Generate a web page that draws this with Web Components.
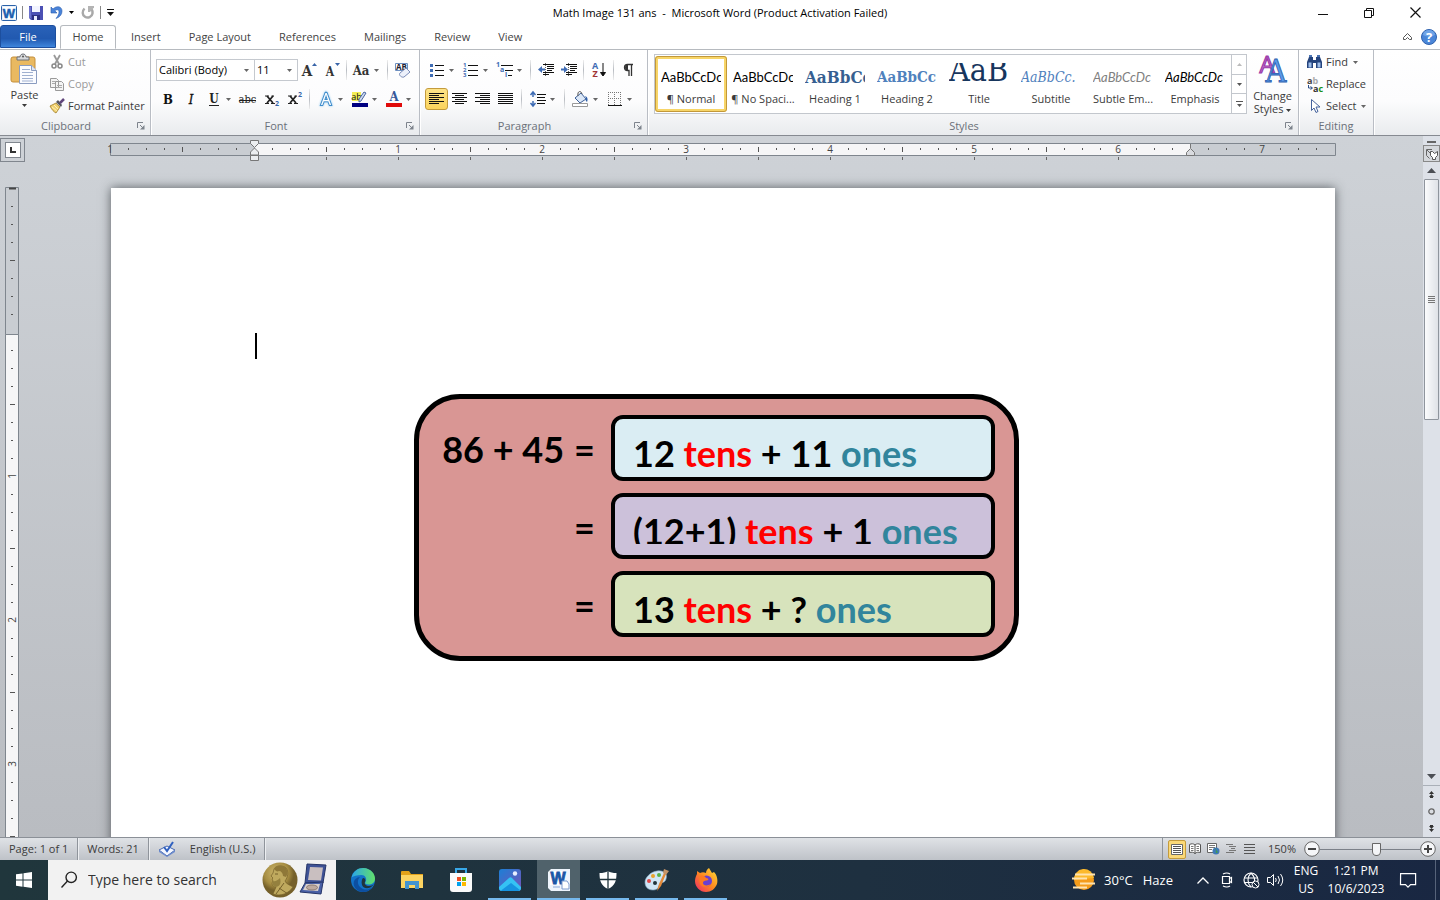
<!DOCTYPE html>
<html lang="en">
<head>
<meta charset="utf-8">
<title>Math Image 131 ans - Microsoft Word</title>
<style>
    html, body {
        height: 100%;
        margin: 0;
    }
    body {
        font: 11px/16px "Open Sans", "Noto Sans", sans-serif;
        color: #3b3b3b;
        overflow: hidden;
    }
</style>
</head>
<body>
<word-window>
    <word-titlebar slot="title">Math Image 131 ans&nbsp; -&nbsp; Microsoft Word (Product Activation Failed)</word-titlebar>
    <word-tabs slot="tabs"></word-tabs>
    <word-ribbon slot="ribbon"></word-ribbon>
    <word-workspace slot="workspace">
        <math-card></math-card>
    </word-workspace>
    <word-statusbar slot="status"></word-statusbar>
    <win-taskbar slot="taskbar"></win-taskbar>
</word-window>

<script>
// [width, height, markup]
const lines = (rows) => rows.map(([x, y, w]) => `<path d="M${x} ${y + 0.5}h${w}" stroke="#111"/>`).join('');
const serif = `font-family="DejaVu Serif Condensed, DejaVu Serif, serif"`;
const icons = {
    word: [16, 16, `<rect x=".5" y=".5" width="15" height="15" rx="1" fill="#e9f1fb" stroke="#2b62a8"/><rect x="2" y="2" width="12" height="12" fill="#fff"/><text x="8" y="13" font-size="13" font-weight="bold" text-anchor="middle" fill="#1c5fb0" stroke="#1c5fb0" stroke-width=".5" font-family="Liberation Sans, sans-serif">W</text>`],
    save: [14, 14, `<path d="M0 0h14v14H2L0 12z" fill="#4b50b4"/><path d="M3 0h8v6H3z" fill="#f2f4ff"/><path d="M3 9h8v5H3z" fill="#2c2f80"/><path d="M5 10h3v4H5z" fill="#e8eaff"/><path d="M1 1v11" stroke="#8d93e4"/>`],
    undo: [13, 13, `<path d="M1 1v6h6L4.800 4.800C7 3.200 9 3.500 9 6c0 2-1 4-3 6.500 4-1.500 6-4 6-7.500 0-4.500-5-6-9-2z" fill="#4a84da" stroke="#2a5dad" stroke-width=".6"/>`],
    redo: [13, 13, `<path d="M3.500 2.500C1 5 1 9 4 10.800s7 0 7.500-3.300c.3-2-.5-4-2-5" fill="none" stroke="#a9a9a9" stroke-width="2.400"/><path d="M7 0h6v1.500L9 6H7z" fill="#b4b4b4"/>`],
    drop: [5, 3, `<path d="M0 0h5L2.500 3z" fill="currentColor"/>`],
    customize: [7, 7, `<path d="M0 .5h7" stroke="#111"/><path d="M0 3h7L3.500 7z" fill="#111"/>`],
    minimize: [10, 10, `<path d="M0 6.500h10" stroke="#111"/>`],
    restore: [10, 10, `<path d="M.5 2.500h7v7h-7zM2.500 2.500v-2h7v7h-2" fill="none" stroke="#111"/>`],
    close: [11, 11, `<path d="M.5.500l10 10M10.500.500l-10 10" stroke="#111" stroke-width="1.200"/>`],
    collapse: [9, 8, `<path d="M.5 4.500L4.500.500l4 4v2h-2l-2-2-2 2h-2z" fill="#fff" stroke="#555"/>`],
    help: [16, 16, `<circle cx="8" cy="8" r="7.500" fill="#4a86d8" stroke="#2f62ae"/><path d="M2 6a6 5 0 0112 0c-4 2-8 2-12 0" fill="#7fb0ee" opacity=".7"/><text x="8" y="12.500" font-size="13" font-weight="bold" fill="#fff" text-anchor="middle">?</text>`],
    paste: [28, 30, `<rect x="1" y="3" width="24" height="25" rx="2" fill="#e9b961" stroke="#c48f3c"/><path d="M7 6V3h3c0-4 6-4 6 0h3v3z" fill="#d7d9dc" stroke="#6d7078"/><circle cx="13" cy="2.500" r="1" fill="#555"/><path d="M9.500 11.500h12l5 5v13h-17z" fill="#fbfcff" stroke="#8a9cc0"/><path d="M21.500 11.500v5h5" fill="#dfe6f5" stroke="#8a9cc0"/><path d="M12 15.500h8M12 18.500h11M12 21.500h11M12 24.500h11M12 27h11" stroke="#9fb0d0"/>`],
    cut: [16, 16, `<path d="M5 1l5 9M11 1L6 10" stroke="#999" stroke-width="1.800"/><circle cx="5" cy="12" r="2" fill="none" stroke="#888" stroke-width="1.500"/><circle cx="11" cy="12" r="2" fill="none" stroke="#888" stroke-width="1.500"/>`],
    copy: [16, 16, `<path d="M1.500 2.500h6l2 2v7h-8zM6.500 5.500h6l2 2v7h-8z" fill="#f4f4f4" stroke="#9a9a9a"/><path d="M3 5.500h4M3 7.500h3M8 9.500h5M8 11.500h5" stroke="#aaa"/>`],
    brush: [16, 16, `<path d="M1 8l6-3 4 4-4 6c-2-1-4-3-6-7z" fill="#f0d070" stroke="#a07d28" stroke-width=".8"/><path d="M7 4l5 5 1-2-4-5z" fill="#54555e"/><path d="M11 5l4-4" stroke="#60457a" stroke-width="2.500"/><path d="M3 9l5 4M5 7l4 4" stroke="#fff3b8"/>`],
    grow: [16, 14, `<text x="6" y="13" font-size="15" font-weight="bold" text-anchor="middle" fill="#333" ${serif}>A</text><path d="M11 3h5l-2.500-3z" fill="#3864a8"/>`],
    shrink: [16, 14, `<text x="6" y="13" font-size="12" font-weight="bold" text-anchor="middle" fill="#333" ${serif}>A</text><path d="M11 0h5l-2.500 3z" fill="#3864a8"/>`],
    case: [17, 14, `<text x="8" y="12" font-size="13" font-weight="bold" text-anchor="middle" fill="#333" ${serif}>Aa</text>`],
    clear: [17, 16, `<path d="M1.500 1.500h12v7h-12z" fill="#fff" stroke="#6d8fc0"/><text x="7.500" y="8" font-size="8" font-weight="bold" text-anchor="middle" fill="#223">AB</text><path d="M6 11l6-5 4 4-6 5c-2 1-6-2-4-4z" fill="#edf1fb" stroke="#7a8cb8"/>`],
    bold: [16, 16, `<text x="8" y="13" font-size="13" font-weight="bold" text-anchor="middle" fill="#111" ${serif}>B</text>`],
    italic: [16, 16, `<text x="8" y="13" font-size="13" font-style="italic" text-anchor="middle" fill="#111" stroke="#111" stroke-width=".3" ${serif}>I</text>`],
    underline: [16, 16, `<text x="8" y="12" font-size="12" font-weight="bold" text-anchor="middle" fill="#222" ${serif}>U</text><path d="M3 14.500h10" stroke="#222"/>`],
    strike: [19, 16, `<text x="9.500" y="12" font-size="11" text-anchor="middle" fill="#222" ${serif}>abc</text><path d="M1 9.500h17" stroke="#222"/>`],
    sub: [16, 16, `<path d="M4 5l6 7M10 5l-6 7" stroke="#222" stroke-width="1.800"/><path d="M2 5h4M8.500 5H11M2 12.500h4M8 12.500h4" stroke="#222"/><text x="14" y="15" font-size="7" font-weight="bold" text-anchor="middle" fill="#3864a8">2</text>`],
    sup: [16, 16, `<path d="M4 5l6 7M10 5l-6 7" stroke="#222" stroke-width="1.800"/><path d="M2 5h4M8.500 5H11M2 12.500h4M8 12.500h4" stroke="#222"/><text x="14" y="6" font-size="7" font-weight="bold" text-anchor="middle" fill="#3864a8">2</text>`],
    effects: [16, 16, `<text x="8" y="14" font-size="16" text-anchor="middle" fill="#fff" stroke="#3f8ccb" stroke-width="2" paint-order="stroke" style="filter: drop-shadow(0 0 1px #8cc8f0)">A</text>`],
    highlight: [17, 17, `<path d="M1 1h9v9H1z" fill="#f4ee55"/><text x="5.500" y="9" font-size="9" text-anchor="middle" fill="#111">ab</text><path d="M15 2l-5 8-2 1v-3l5-7z" fill="#cdd9ef" stroke="#4a66a0"/><path d="M1 12h16v4H1z" fill="#000080"/>`],
    color: [16, 17, `<text x="8" y="10" font-size="13" font-weight="bold" text-anchor="middle" fill="#36599a" ${serif}>A</text><path d="M0 12h16v4H0z" fill="#e00b0b"/>`],
    bullets: [14, 14, `<path d="M0 1h3v3H0zM0 6h3v3H0zM0 11h3v3H0z" fill="#3f6cb4"/>${lines([[5, 2, 9], [5, 7, 9], [5, 12, 9]])}`],
    numbers: [15, 16, `<g font-size="6" font-weight="bold" fill="#3f6cb4"><text y="5">1</text><text y="10">2</text><text y="15">3</text></g>${lines([[5, 3, 10], [5, 8, 10], [5, 13, 10]])}`],
    multilevel: [17, 16, `<g font-size="7" font-weight="bold" fill="#3f6cb4"><text y="5">1</text><text x="4" y="10">a</text><text x="9" y="15">i</text></g>${lines([[5, 3, 12], [9, 8, 8], [12, 13, 4]])}`],
    outdent: [16, 14, `${lines([[5, 1, 11], [9, 3, 7], [9, 5, 7], [9, 7, 5], [5, 9, 11], [5, 11, 6]])}<path d="M7 6.500H2" stroke="#3f6cb4" stroke-width="2"/><path d="M0 6.500l4-3.500v7z" fill="#3f6cb4"/><path d="M7.500 0v14" stroke="#666" stroke-dasharray="1 1"/>`],
    indent: [16, 14, `${lines([[5, 1, 11], [9, 3, 7], [9, 5, 7], [9, 7, 5], [5, 9, 11], [5, 11, 6]])}<path d="M0 6.500h4" stroke="#3f6cb4" stroke-width="2"/><path d="M7 6.500L3 3v7z" fill="#3f6cb4"/><path d="M7.500 0v14" stroke="#666" stroke-dasharray="1 1"/>`],
    sort: [15, 16, `<text x="4" y="7" font-size="9" font-weight="bold" text-anchor="middle" fill="#3f6cb4">A</text><text x="4" y="15" font-size="9" font-weight="bold" text-anchor="middle" fill="#a03434">Z</text><path d="M12 1v12M9.500 10.500L12 14l2.500-3.500z" stroke="#111" fill="#111"/>`],
    pilcrow: [11, 13, `<path d="M10 .5H4.500a3 3 0 000 6H6V12M8.500.500V12" fill="none" stroke="#333" stroke-width="1.300"/><path d="M5 .5a3 3 0 000 6z" fill="#333"/>`],
    left: [15, 12, lines([[0, 0, 15], [0, 2, 10], [0, 4, 15], [0, 6, 10], [0, 8, 15], [0, 10, 10]])],
    center: [15, 12, lines([[0, 0, 15], [3, 2, 9], [0, 4, 15], [3, 6, 9], [0, 8, 15], [3, 10, 9]])],
    right: [15, 12, lines([[0, 0, 15], [5, 2, 10], [0, 4, 15], [5, 6, 10], [0, 8, 15], [5, 10, 10]])],
    justify: [15, 12, lines([[0, 0, 15], [0, 2, 15], [0, 4, 15], [0, 6, 15], [0, 8, 15], [0, 10, 15]])],
    spacing: [16, 16, `<path d="M3 1v5M3 10v5M.5 4L3 1l2.500 3M.5 12L3 15l2.500-3" stroke="#3f6cb4" stroke-width="1.500" fill="none"/>${lines([[7, 3, 9], [7, 6, 8], [7, 9, 9], [7, 12, 8]])}`],
    bucket: [17, 16, `<path d="M3 7l6-5 5 6-6 4z" fill="#dbe7f7" stroke="#3c5f98"/><path d="M6 5c-1-5 3-6 4-2" fill="none" stroke="#555"/><path d="M13 5c3 1 3 4 2 6-1-1-2-2-1-4z" fill="#2f5fa8"/><path d="M.5 12.500h15v3H.5z" fill="#fff" stroke="#999"/>`],
    borders: [14, 14, `<path d="M.5 0v13M0 .5h13M12.500 0v13M6.500 0v13M0 6.500h13" stroke="#777" stroke-dasharray="1 1"/><path d="M0 13.500h14" stroke="#111"/>`],
    up: [5, 3, `<path d="M0 3h5L2.500 0z" fill="currentColor"/>`],
    more: [7, 6, `<path d="M0 .5h7" stroke="currentColor"/><path d="M1 3h5L3.500 6z" fill="currentColor"/>`],
    styles: [30, 28, `<text x="9" y="18" font-size="24" text-anchor="middle" fill="#c878d0" stroke="#9a3aa8" stroke-width="1.200">A</text><text x="18" y="27" font-size="32" text-anchor="middle" fill="#5a9aea" stroke="#2d5fae" stroke-width=".8" ${serif}>A</text>`],
    find: [16, 14, `<path d="M2 2h4v3h3V2h4l2 5v6H9V8H6v5H0V7z" fill="#24437c"/><path d="M1.500 7.500h3v5h-3zM10.500 7.500h3v5h-3z" fill="#9dbdea"/><path d="M2 1h3M10 1h3" stroke="#4c74b4" stroke-width="2"/>`],
    replace: [17, 15, `<text y="7" font-size="9" font-weight="bold" fill="#444">a<tspan fill="#aaa">b</tspan></text><text x="6" y="15" font-size="9" font-weight="bold" fill="#333">a<tspan fill="#189018">c</tspan></text><path d="M1.500 8v3H5M3.500 9.500l2 1.500-2 1.500" fill="none" stroke="#2a4d88"/>`],
    select: [16, 16, `<path d="M4.500 1.500v11l2.500-2.500 2 4.500 2-1-2-4.500h4z" fill="#fff" stroke="#45629c"/>`],
    launcher: [8, 8, `<path d="M.5 6V.5H6M3 3l3 3" fill="none" stroke="#7d838c"/><path d="M7.500 3v4.500H3z" fill="#7d838c"/>`],
    tabstop: [6, 6, `<path d="M1 0v5h5" fill="none" stroke="#333" stroke-width="2"/>`],
    rulers: [12, 12, `<path d="M6 1.500H.5v6l3 3M1 2l4 4" fill="none" stroke="#666"/><path d="M4.500 3.500h2l2 2 3-2v4l-2 2v2h-3v-2l-2-2z" fill="#fff" stroke="#555"/>`],
    arrowup: [9, 5, `<path d="M0 5h9L4.500 0z" fill="#4c4f55"/>`],
    arrowdown: [9, 5, `<path d="M0 0h9L4.500 5z" fill="#4c4f55"/>`],
    prev: [5, 7, `<path d="M0 3h5L2.500 0zM0 6h5L2.500 3z" fill="#333"/><path d="M1 6.500h3" stroke="#333"/>`],
    next: [5, 7, `<path d="M0 1h5L2.500 4zM0 4h5L2.500 7z" fill="#333"/><path d="M1 .5h3" stroke="#333"/>`],
    browse: [7, 7, `<circle cx="3.500" cy="3.500" r="2.700" fill="#dadde2" stroke="#666" stroke-width="1.300"/>`],
    proof: [18, 16, `<path d="M1 9l8-4 8 4-8 6z" fill="#f4f7ff" stroke="#4668b0"/><path d="M1 9v2l8 5 8-5V9l-8 6z" fill="#6d8ccd"/><path d="M6 6l3 4 6-9" fill="none" stroke="#2f60c0" stroke-width="2"/>`],
    print: [12, 11, `<path d="M.5.500h11v10H.5z" fill="#fff" stroke="#666"/><path d="M2 2.500h8M2 4.500h8M2 6.500h8M2 8.500h8" stroke="#555"/>`],
    reading: [12, 12, `<path d="M.5 1.500c2-1 4-1 5.500.500C7.500.500 9.500.500 11.500 1.500v8c-2-.5-4-.5-5.500 1-1.500-1.500-3.500-1.500-5.500-1zM6 2v9" fill="#fff" stroke="#555"/><path d="M2 3.500h2.500M2 5.500h2.500M2 7.500h2.500M7.500 3.500H10M7.500 5.500H10M7.500 7.500H10" stroke="#777"/>`],
    web: [13, 12, `<path d="M.5.500h9v9h-9z" fill="#fff" stroke="#666"/><path d="M2 2.500h6M2 4.500h6M2 6.500h3" stroke="#777"/><circle cx="9" cy="8" r="3.500" fill="#3f79b8"/><path d="M8 5c2 1 1 3 3 4-1 2-3 1-2-1" fill="#3f9a52"/>`],
    outline: [10, 10, `<path d="M0 .5h7M3 2.500h7M5 4.500h4M3 6.500h7M0 8.500h8" stroke="#777"/>`],
    draft: [11, 10, `<path d="M0 .5h11M0 3.500h11M0 6.500h11M0 9.500h11" stroke="#555"/>`],
    minus: [16, 16, `<circle cx="8" cy="8" r="7.300" fill="#f5f6f8" stroke="#666"/><path d="M4 8h8" stroke="#444" stroke-width="2"/>`],
    plus: [16, 16, `<circle cx="8" cy="8" r="7.300" fill="#f5f6f8" stroke="#666"/><path d="M4 8h8M8 4v8" stroke="#444" stroke-width="2"/>`],
    start: [16, 16, `<path d="M0 2.300l6.500-.9v6.200H0zM7.500 1.200L16 0v7.600H7.500zM0 8.500h6.500v6.200L0 13.800zM7.500 8.500H16V16l-8.500-1.200z" fill="#fff"/>`],
    search: [18, 18, `<circle cx="11.200" cy="6.300" r="5.200" fill="none" stroke="#222" stroke-width="1.400"/><path d="M7.500 10L1.500 16.500" stroke="#222" stroke-width="1.400"/>`],
    medal: [36, 36, `<defs><radialGradient id="gold" cx=".4" cy=".3"><stop offset="0" stop-color="#d0ba70"/><stop offset=".7" stop-color="#a68d42"/><stop offset="1" stop-color="#75602a"/></radialGradient></defs><circle cx="18" cy="18" r="17.500" fill="url(#gold)"/><path d="M12 7c2-4 9-4 12-1 3 4 2 9-1 13 1 3 5 4 8 6-4 6-12 10-20 7l3-7c-2 0-4-1-4-4l1-2-1-2 1-1-2-2 2-3z" fill="#bfa95e" stroke="#75602a" stroke-width=".7"/><path d="M12 7c2-4 9-4 12-1 2 3 2 6 0 9l-3-1c0-3-2-5-4-5-2 1-3 0-5-2z" fill="#8f7838"/><path d="M11 19c2 1 5-1 7-3 1 4 1 8-4 9-2 0-4-2-3-6z" fill="#94803e"/><path d="M13 12h3M17 26l9 6M22 21l-8 11" fill="none" stroke="#75602a"/>`],
    casebox: [26, 34, `<path d="M7 1l19 1-3 18H5z" fill="#3e5296" stroke="#263568"/><path d="M10 4l13 .5-2 13-13-.5z" fill="#c9bfc0"/><path d="M5 20l18-1-2 12L0 29z" fill="#4a60a6" stroke="#263568"/><path d="M6 21h14l-2 7-15-1z" fill="#d8cfcc"/><ellipse cx="12" cy="24.500" rx="5.500" ry="2.500" fill="#bdaaa0" stroke="#8d7b74"/>`],
    edge: [24, 24, `<defs><linearGradient id="e1" x2="1"><stop offset="0" stop-color="#2aa5e8"/><stop offset="1" stop-color="#62e06a"/></linearGradient></defs><circle cx="12" cy="12" r="12" fill="#1372c8"/><path d="M.5 9.500C2.500 3 7-.2 12.500 0 20 .3 24 6 24 10.500c0 4-3 6-6.500 6-3 0-4-1-3-2.500 2-3.500-.5-7-4-7C6 7 2.500 8 .5 9.500z" fill="url(#e1)"/><path d="M9 9c-4 4-2 10 3 12 4 1.500 7 0 9-2-3 6-12 6.500-16 2S2 10 9 9z" fill="#0d4fa0"/><path d="M14 14c-1 2 1 4 4 4 2 0 4-1 5-2-3 5-10 6-12 1-1-3 0-6 1-7 2 0 3 2 2 4z" fill="#20343c"/>`],
    explorer: [22, 20, `<path d="M0 2q0-1 1-1h7l2 3h12v12H0z" fill="#e3a21a"/><path d="M0 5h22v13H0z" fill="#fcd462"/><path d="M4 11h14v8h-4v-4H8v4H4z" fill="#4394d0"/>`],
    store: [24, 24, `<path d="M7 6V1h10v5" fill="none" stroke="#38a8e8" stroke-width="2"/><path d="M1 5h22v16q0 3-3 3H4q-3 0-3-3z" fill="#fafafa"/><path d="M8 9h4v4H8z" fill="#f04e23"/><path d="M13 9h4v4h-4z" fill="#7cb900"/><path d="M8 14h4v4H8z" fill="#00a2ed"/><path d="M13 14h4v4h-4z" fill="#fdb900"/>`],
    photos: [22, 22, `<defs><linearGradient id="p1" y2="1"><stop stop-color="#1c7fd6"/><stop offset="1" stop-color="#7553b8"/></linearGradient></defs><rect width="22" height="22" rx="3" fill="url(#p1)"/><circle cx="16" cy="4.500" r="2.200" fill="#e8eeff"/><path d="M0 18L10 9q1.500-1.500 3 0l9 9v1q0 3-3 3H3q-3 0-3-3z" fill="#35c2f4"/><path d="M2 21.500L12 14l9 7q-1 1-2 1H3z" fill="#1693e0"/>`],
    wordapp: [22, 22, `<path d="M3 0h19v22H3L0 19V3z" fill="#eef4fc"/><path d="M2 2h12v14H2z" fill="#fff"/><text x="10" y="15" font-size="16" font-weight="bold" text-anchor="middle" fill="#1b56a6" stroke="#1b56a6" stroke-width=".8" font-family="Liberation Sans, sans-serif">W</text><path d="M14 12h5l2 3v5h-7z" fill="#fff" stroke="#7d9bce"/><path d="M5 18h7" stroke="#8aa8d8"/>`],
    shield: [18, 18, `<path d="M9 0c2 1.500 5 2 8.500 2 0 8-1.500 12.500-8.500 16C2 14.500.5 10 .5 2 4 2 7 1.500 9 0z" fill="#fff"/><path d="M9 0v18M0 8.500h18" stroke="#20343c" stroke-width="1.300"/>`],
    paint: [24, 24, `<path d="M12 3c7-1 11 3 9 8-1 4-4 3-6 5s-1 6-7 6-8-4-8-8S5 4 12 3z" fill="#cfe5f5" stroke="#88acc8" stroke-width=".6"/><circle cx="4" cy="13" r="2" fill="#e04848"/><circle cx="8" cy="8" r="2" fill="#e8a22c"/><circle cx="14" cy="7" r="2" fill="#57b048"/><circle cx="10" cy="15" r="2" fill="#20343c"/><path d="M12 23l2-7 5-11 2 1-5 12z" fill="#e38a3a"/><path d="M18 5l1-4 5 2-3 4z" fill="#c49468"/>`],
    firefox: [24, 24, `<defs><linearGradient id="f1" x1="1" x2="0" y2="1"><stop stop-color="#ffe03a"/><stop offset=".5" stop-color="#ff8a1e"/><stop offset="1" stop-color="#f0246c"/></linearGradient></defs><path d="M15 0c1 2 2 3 3 5l2-1c3 3 4 8 3 12-2 5-6 8-11 8C6 24 1 19 1 13c0-3 1-5 2-7V3l3 2c2-1 4-1 6 0 0-2 1-4 3-5z" fill="url(#f1)"/><circle cx="12.500" cy="13" r="5.500" fill="#6a3fd0"/><path d="M6 8c3-1 5 0 6 2 2 0 3 1 2 2s-5 0-5 3 5 3 8 1c-2 4-9 4-11 0-1-3-1-5 0-8z" fill="#ff7a20"/>`],
    haze: [24, 22, `<circle cx="12" cy="11" r="10" fill="#f59c1a"/><path d="M2 11A10 10 0 0122 9z" fill="#fcb92c"/><path d="M3 5.500h20M0 9.500h15M8 14.500h15M1 18.500h14" stroke="#ffe3b0" stroke-width="1.800"/>`],
    chevron: [12, 7, `<path d="M.5 6.500L6 1l5.500 5.500" fill="none" stroke="#fff" stroke-width="1.300"/>`],
    meet: [12, 16, `<path d="M1.500 4.500h7v7h-7zM8.500 6.500l2-1v5l-2-1M2 2q4-2 7 0M2 14q4 2 7 0" fill="none" stroke="#fff" stroke-width="1.200"/>`],
    globe: [17, 17, `<circle cx="8" cy="8" r="7" fill="none" stroke="#fff" stroke-width="1.200"/><path d="M1 6h14M1 10.500h9M8 1c-4 4-4 10 0 14M8 1c3 3 4 5 3.500 8" fill="none" stroke="#fff" stroke-width="1.100"/><circle cx="12.500" cy="12.500" r="3.500" fill="#1a2a40" stroke="#fff"/><path d="M10 10l5 5" stroke="#fff"/>`],
    speaker: [17, 14, `<path d="M.5 4.500h3l3-3v11l-3-3h-3z" fill="none" stroke="#fff"/><path d="M8.500 5q1.500 2 0 4M11 3q3 4 0 8M13.500 1q4.500 6 0 12" fill="none" stroke="#fff"/>`],
    notify: [16, 16, `<path d="M.6 1.600h15v11h-5L8 15.200l-2.500-2.600h-5z" fill="none" stroke="#fff" stroke-width="1.200"/>`],
};

customElements.define('word-icon', class extends HTMLElement {
    connectedCallback() {
        if (this.shadowRoot) return;
        const [w, h, body] = icons[this.getAttribute('name')];
        this.attachShadow({mode: 'open'}).innerHTML = `
            <style>
            :host { display: inline-flex; flex: none; }
            svg { display: block; overflow: visible; font-family: "Open Sans", sans-serif; }
            </style>
            <svg width="${w}" height="${h}" viewBox="0 0 ${w} ${h}" aria-hidden="true">${body}</svg>`;
    }
});

// registers an element whose shadow root is a clone of the given markup
function define(name, html, setup) {
    const template = document.createElement('template');
    template.innerHTML = `<style>
    * { box-sizing: border-box; }
    button, input, select { font: inherit; color: inherit; margin: 0; padding: 0; border: 0; background: none; }
    button { display: flex; align-items: center; justify-content: center; }
    </style>` + html;
    customElements.define(name, class extends HTMLElement {
        connectedCallback() {
            if (this.shadowRoot) return;
            this.attachShadow({mode: 'open'}).appendChild(template.content.cloneNode(true));
            if (setup) setup(this, this.shadowRoot);
        }
    });
}

define('word-window', `
    <style>
    :host {
        display: flex;
        flex-direction: column;
        height: 100vh;
        background: #fff;
    }
    .workspace {
        flex: 1;
        min-height: 0;
        display: flex;
    }
    </style>
    <slot name="title"></slot>
    <slot name="tabs"></slot>
    <slot name="ribbon"></slot>
    <div class="workspace"><slot name="workspace"></slot></div>
    <slot name="status"></slot>
    <slot name="taskbar"></slot>
`);

define('word-titlebar', `
    <style>
    :host {
        display: grid;
        grid-template-columns: 1fr auto 1fr;
        align-items: center;
        height: 25px;
        color: #000;
    }
    .quick {
        display: flex;
        align-items: center;
        gap: 5px;
        padding-left: 1px;
        height: 22px;
    }
    .rule {
        width: 1px;
        height: 13px;
        background: #888;
    }
    .quick button {
        gap: 6px;
        padding: 0 1px;
    }
    .buttons {
        display: flex;
        justify-content: flex-end;
        padding-right: 2px;
    }
    .buttons button {
        width: 46px;
        height: 25px;
    }
    </style>
    <div class="quick">
        <word-icon name="word"></word-icon>
        <span class="rule"></span>
        <button aria-label="Save"><word-icon name="save"></word-icon></button>
        <button aria-label="Undo"><word-icon name="undo"></word-icon><word-icon name="drop"></word-icon></button>
        <button aria-label="Repeat"><word-icon name="redo"></word-icon></button>
        <span class="rule"></span>
        <button aria-label="Customize"><word-icon name="customize"></word-icon></button>
    </div>
    <slot></slot>
    <div class="buttons">
        <button aria-label="Minimize"><word-icon name="minimize"></word-icon></button>
        <button aria-label="Restore"><word-icon name="restore"></word-icon></button>
        <button aria-label="Close"><word-icon name="close"></word-icon></button>
    </div>
`);

define('word-tabs', `
    <style>
    :host {
        display: flex;
        height: 24px;
        border-bottom: 1px solid #b6babf;
    }
    nav {
        flex: 1;
        display: flex;
    }
    button {
        height: 24px;
        padding: 0 14px;
        color: #444;
    }
    .file {
        width: 56px;
        height: 23px;
        margin-right: 4px;
        color: #fff;
        border: 1px solid #1d4f9e;
        border-radius: 3px 3px 0 0;
        background: linear-gradient(#2a62b8, #2159b0 60%, #3f86dc);
    }
    .active {
        width: 56px;
        margin-right: 1px;
        border: 1px solid #b6babf;
        border-bottom: 1px solid #fff;
        border-radius: 3px 3px 0 0;
        background: #fff;
    }
    .right {
        display: flex;
        align-items: center;
        gap: 9px;
        padding-right: 3px;
    }
    .right button { padding: 0; }
    </style>
    <nav>
        <button class="file">File</button>
        <button class="active">Home</button>
        <button>Insert</button>
        <button>Page Layout</button>
        <button>References</button>
        <button>Mailings</button>
        <button>Review</button>
        <button>View</button>
    </nav>
    <div class="right">
        <button aria-label="Minimize the Ribbon"><word-icon name="collapse"></word-icon></button>
        <button aria-label="Help"><word-icon name="help"></word-icon></button>
    </div>
`);

define('ribbon-group', `
    <style>
    :host {
        display: flex;
        flex-direction: column;
        border-right: 1px solid #b9bdc4;
        box-shadow: 1px 0 #fff;
    }
    .content {
        flex: 1;
        display: flex;
    }
    footer {
        display: flex;
        align-items: center;
        height: 18px;
        color: #6b7079;
    }
    .label {
        flex: 1;
        text-align: center;
    }
    footer button {
        width: 18px;
        height: 16px;
    }
    :host([plain]) footer button { display: none; }
    </style>
    <div class="content"><slot></slot></div>
    <footer><span class="label"></span><button aria-label="More options"><word-icon name="launcher"></word-icon></button></footer>
`, (host, root) => {
    root.querySelector('.label').textContent = host.getAttribute('label');
});

define('tool-button', `
    <style>
    :host {
        display: flex;
        color: #666;
    }
    :host([drop]) { margin-right: 2px; }
    button {
        height: 22px;
        border: 1px solid transparent;
        border-radius: 3px;
    }
    .icon {
        display: flex;
        justify-content: center;
        width: 21px;
    }
    .arrow {
        display: none;
        width: 9px;
        justify-content: center;
    }
    :host([drop]) .arrow { display: flex; }
    :host([pressed]) button {
        border-color: #c49b3c;
        background: linear-gradient(#fde388, #fbd35c);
    }
    </style>
    <button><span class="icon"></span><span class="arrow"><word-icon name="drop"></word-icon></span></button>
`, (host, root) => {
    const name = host.getAttribute('icon');
    root.querySelector('button').setAttribute('aria-label', name);
    root.querySelector('.icon').innerHTML = `<word-icon name="${name}"></word-icon>`;
});

define('tool-item', `
    <style>
    :host { display: flex; }
    button {
        height: 22px;
        gap: 3px;
    }
    .icon {
        display: flex;
        justify-content: center;
        width: 16px;
    }
    .arrow {
        display: none;
        color: #666;
        margin-left: 2px;
    }
    :host([drop]) .arrow { display: flex; }
    :host([disabled]) button { color: #9a9a9a; }
    </style>
    <button><span class="icon"></span><slot></slot><word-icon class="arrow" name="drop"></word-icon></button>
`, (host, root) => {
    root.querySelector('.icon').innerHTML = `<word-icon name="${host.getAttribute('icon')}"></word-icon>`;
});

define('tool-large', `
    <style>
    :host { display: flex; }
    button {
        flex-direction: column;
        justify-content: flex-start;
        gap: 3px;
        line-height: 13px;
    }
    .icon {
        display: flex;
        height: 31px;
    }
    </style>
    <button><span class="icon"></span><slot></slot></button>
`, (host, root) => {
    root.querySelector('.icon').innerHTML = `<word-icon name="${host.getAttribute('icon')}"></word-icon>`;
});

define('font-select', `
    <style>
    :host {
        display: flex;
        align-items: center;
        height: 22px;
        border: 1px solid #c5c9cf;
        margin-right: -1px;
        background: #fff;
        color: #000;
    }
    select {
        appearance: none;
        flex: 1;
        min-width: 0;
        height: 20px;
        padding-left: 2px;
    }
    word-icon {
        color: #666;
        padding: 0 5px;
        pointer-events: none;
    }
    </style>
    <select><option></option></select><word-icon name="drop"></word-icon>
`, (host, root) => {
    root.querySelector('option').textContent = host.getAttribute('value');
    root.querySelector('select').setAttribute('aria-label', host.getAttribute('label'));
});

define('style-card', `
    <style>
    :host { display: flex; }
    button {
        flex-direction: column;
        justify-content: flex-start;
        width: 72px;
        height: 56px;
        padding-top: 4px;
        border: 3px solid transparent;
        border-radius: 3px;
    }
    :host([selected]) button {
        border-color: #f7d568;
        outline: 1px solid #c2983a;
        outline-offset: -1px;
    }
    .sample {
        display: flex;
        align-items: center;
        width: 60px;
        height: 28px;
        overflow: hidden;
        white-space: nowrap;
        font: 13px/20px Lato, sans-serif;
        color: #000;
    }
    :host([kind="h1"]) .sample { font: bold 17px/20px "DejaVu Serif Condensed", "DejaVu Serif", serif; color: #365f91; }
    :host([kind="h2"]) .sample { font: bold 15px/20px "DejaVu Serif Condensed", "DejaVu Serif", serif; color: #4f81bd; }
    :host([kind="title"]) .sample { font: 32px/14px "DejaVu Serif Condensed", "DejaVu Serif", serif; color: #17365d; align-items: flex-start; }
    :host([kind="subtitle"]) .sample { font: italic 14px/20px "DejaVu Serif Condensed", "DejaVu Serif", serif; color: #4f81bd; }
    :host([kind="subtle"]) .sample { font-style: italic; color: #808080; }
    :host([kind="emphasis"]) .sample { font-style: italic; }
    </style>
    <button><span class="sample"></span><slot></slot></button>
`, (host, root) => {
    root.querySelector('.sample').textContent = host.getAttribute('sample');
});

define('word-ribbon', `
    <style>
    :host {
        display: flex;
        height: 85px;
        border-bottom: 1px solid #868a91;
        background: linear-gradient(#fff, #fcfcfd 60%, #e9ebee);
    }
    .clipboard { width: 151px; }
    .font { width: 269px; }
    .paragraph { width: 228px; }
    .styles { width: 651px; }
    .editing { width: 75px; }
    .stack {
        display: flex;
        flex-direction: column;
        padding-top: 1px;
    }
    .editing .stack { padding-left: 8px; }
    .rows {
        display: flex;
        flex-direction: column;
        gap: 7px;
        padding: 9px 0 0 5px;
        --gap: 4px;
    }
    .row {
        display: flex;
        align-items: center;
    }
    .row:first-child { --gap: 3px; }
    .row hr {
        width: 1px;
        height: 20px;
        margin: 0 var(--gap);
        border: 0;
        background: linear-gradient(#eee, #b8bcc2, #eee);
    }
    .family { width: 99px; }
    .size { width: 44px; }
    .paste {
        width: 49px;
        justify-content: center;
        padding-top: 4px;
    }
    .gallery {
        display: flex;
        height: 60px;
        margin: 4px 0 0 6px;
        border: 1px solid #c3c7cd;
        background: #fff;
    }
    .cards {
        display: flex;
        align-items: center;
    }
    .scroll {
        display: flex;
        flex-direction: column;
        width: 15px;
        border-left: 1px solid #c3c7cd;
        color: #555;
    }
    .scroll button {
        flex: 1;
        border-bottom: 1px solid #c3c7cd;
    }
    .scroll button:last-child { border: 0; }
    .scroll button:disabled { color: #bbb; }
    .change {
        flex: 1;
        justify-content: center;
        padding-top: 5px;
    }
    .change word-icon { vertical-align: middle; }
    </style>
    <ribbon-group class="clipboard" label="Clipboard">
        <tool-large class="paste" icon="paste">Paste<word-icon name="drop"></word-icon></tool-large>
        <div class="stack">
            <tool-item icon="cut" disabled>Cut</tool-item>
            <tool-item icon="copy" disabled>Copy</tool-item>
            <tool-item icon="brush">Format Painter</tool-item>
        </div>
    </ribbon-group>
    <ribbon-group class="font" label="Font">
        <div class="rows">
            <div class="row">
                <font-select class="family" label="Font" value="Calibri (Body)"></font-select>
                <font-select class="size" label="Font size" value="11"></font-select>
                <tool-button icon="grow"></tool-button>
                <tool-button icon="shrink"></tool-button>
                <hr>
                <tool-button icon="case" drop></tool-button>
                <hr>
                <tool-button icon="clear"></tool-button>
            </div>
            <div class="row">
                <tool-button icon="bold"></tool-button>
                <tool-button icon="italic"></tool-button>
                <tool-button icon="underline" drop></tool-button>
                <tool-button icon="strike"></tool-button>
                <tool-button icon="sub"></tool-button>
                <tool-button icon="sup"></tool-button>
                <hr>
                <tool-button icon="effects" drop></tool-button>
                <tool-button icon="highlight" drop></tool-button>
                <tool-button icon="color" drop></tool-button>
            </div>
        </div>
    </ribbon-group>
    <ribbon-group class="paragraph" label="Paragraph">
        <div class="rows">
            <div class="row">
                <tool-button icon="bullets" drop></tool-button>
                <tool-button icon="numbers" drop></tool-button>
                <tool-button icon="multilevel" drop></tool-button>
                <hr>
                <tool-button icon="outdent"></tool-button>
                <tool-button icon="indent"></tool-button>
                <hr>
                <tool-button icon="sort"></tool-button>
                <hr>
                <tool-button icon="pilcrow"></tool-button>
            </div>
            <div class="row">
                <tool-button icon="left" pressed></tool-button>
                <tool-button icon="center"></tool-button>
                <tool-button icon="right"></tool-button>
                <tool-button icon="justify"></tool-button>
                <hr>
                <tool-button icon="spacing" drop></tool-button>
                <hr>
                <tool-button icon="bucket" drop></tool-button>
                <tool-button icon="borders" drop></tool-button>
            </div>
        </div>
    </ribbon-group>
    <ribbon-group class="styles" label="Styles">
        <div class="gallery">
            <div class="cards">
                <style-card sample="AaBbCcDc" selected>¶ Normal</style-card>
                <style-card sample="AaBbCcDc">¶ No Spaci...</style-card>
                <style-card kind="h1" sample="AaBbCc">Heading 1</style-card>
                <style-card kind="h2" sample="AaBbCc">Heading 2</style-card>
                <style-card kind="title" sample="AaB">Title</style-card>
                <style-card kind="subtitle" sample="AaBbCc.">Subtitle</style-card>
                <style-card kind="subtle" sample="AaBbCcDc">Subtle Em...</style-card>
                <style-card kind="emphasis" sample="AaBbCcDc">Emphasis</style-card>
            </div>
            <div class="scroll">
                <button aria-label="Up" disabled><word-icon name="up"></word-icon></button>
                <button aria-label="Down"><word-icon name="drop"></word-icon></button>
                <button aria-label="More"><word-icon name="more"></word-icon></button>
            </div>
        </div>
        <tool-large class="change" icon="styles"><span>Change<br>Styles <word-icon name="drop"></word-icon></span></tool-large>
    </ribbon-group>
    <ribbon-group class="editing" label="Editing" plain>
        <div class="stack">
            <tool-item icon="find" drop>Find</tool-item>
            <tool-item icon="replace">Replace</tool-item>
            <tool-item icon="select" drop>Select</tool-item>
        </div>
    </ribbon-group>
`);

// 144px to the inch, a dot every eighth
define('ruler-h', `
    <style>
    :host { display: block; }
    svg { display: block; overflow: visible; font: 10px "Open Sans", sans-serif; fill: #444; }
    </style>
`, (host, root) => {
    let marks = '';
    for (let i = 1; i < 68; i++) {
        const x = i * 18;
        if (i === 8 || i === 60) continue;
        if (i % 8 === 0) marks += `<text x="${x}" y="14" text-anchor="middle">${i / 8 - 1}</text>`;
        else if (i % 4 === 0) marks += `<path d="M${x + 0.5} 8v5" stroke="#555"/>`;
        else marks += `<path d="M${x + 0.5} 9v2" stroke="#555"/>`;
        if (i % 4 === 0 && i > 8 && i < 60) marks += `<path d="M${x + 0.5} 18v3" stroke="#666"/>`;
    }
    root.innerHTML += `
        <svg width="1226" height="24">
            <path d="M.5 4.500h1225v12H.5z" fill="#c9cdd2" stroke="#7f868e"/>
            <path d="M145 5h936v11H145z" fill="#f6f6f7"/>
            <text x="0" y="14" text-anchor="middle">1</text>
            ${marks}
            <path d="M140.500 1.500h8v3l-4 4-4-4zM144.500 9l4 4v3h-8v-3zM140.500 16.500h8v5h-8z" fill="#eceef0" stroke="#777"/>
            <path d="M1080.500 5v4M1076.500 16.500v-3l4-4 4 4v3z" fill="#d9dbdf" stroke="#777"/>
        </svg>`;
});

define('ruler-v', `
    <style>
    :host { display: block; overflow: hidden; }
    svg { display: block; font: 10px "Open Sans", sans-serif; fill: #444; }
    </style>
`, (host, root) => {
    let marks = '';
    for (let i = 1; i < 88; i++) {
        const y = i * 18 + 1;
        if (i === 8) continue;
        if (i % 8 === 0) marks += `<text transform="translate(11 ${y}) rotate(-90)" text-anchor="middle">${i / 8 - 1}</text>`;
        else if (i % 4 === 0) marks += `<path d="M5 ${y + 0.5}h5" stroke="#555"/>`;
        else marks += `<path d="M6 ${y + 0.5}h2" stroke="#555"/>`;
    }
    root.innerHTML += `
        <svg width="14" height="1585">
            <path d="M.5.500h13v1584H.5z" fill="#c9cdd2" stroke="#7f868e"/>
            <path d="M.5 147.500h13v1294H.5z" fill="#f6f6f7" stroke="#7f868e"/>
            <path d="M4 1.500h7" stroke="#444" stroke-width="2"/>
            ${marks}
        </svg>`;
});

define('word-scrollbar', `
    <style>
    :host {
        display: flex;
        flex-direction: column;
        align-items: center;
        background: #dde1e8;
    }
    button { width: 17px; height: 17px; }
    .split {
        width: 9px;
        height: 2px;
        margin: 5px 0 2px;
        background: #666;
    }
    .rulers {
        border: 1px solid #888;
        background: #d5d8dc;
    }
    .track {
        flex: 1;
        width: 15px;
    }
    .thumb {
        display: flex;
        align-items: center;
        justify-content: center;
        height: 41%;
        border: 1px solid #8f959d;
        border-radius: 1px;
        background: linear-gradient(90deg, #fbfcfd, #dfe2e7);
    }
    .grip {
        width: 7px;
        height: 7px;
        background: repeating-linear-gradient(#777 0 1px, transparent 1px 2px);
    }
    .browse { border-top: 1px solid #aab0b8; }
    </style>
    <span class="split"></span>
    <button class="rulers" aria-label="View Ruler"><word-icon name="rulers"></word-icon></button>
    <button aria-label="Scroll up"><word-icon name="arrowup"></word-icon></button>
    <div class="track"><div class="thumb"><span class="grip"></span></div></div>
    <button aria-label="Scroll down"><word-icon name="arrowdown"></word-icon></button>
    <div class="browse">
        <button aria-label="Previous Page"><word-icon name="prev"></word-icon></button>
        <button aria-label="Select Browse Object"><word-icon name="browse"></word-icon></button>
        <button aria-label="Next Page"><word-icon name="next"></word-icon></button>
    </div>
`);

define('word-workspace', `
    <style>
    :host {
        flex: 1;
        display: grid;
        grid-template-columns: 23px minmax(0, 1fr) 17px;
        grid-template-rows: 51px minmax(0, 1fr);
        background: linear-gradient(#ced2d7, #b9bcc1);
    }
    .corner button {
        width: 25px;
        height: 24px;
        margin-top: 2px;
        border: 1px solid #80868e;
    }
    .corner span {
        display: flex;
        padding: 4px;
        border: 1px solid #80868e;
        background: #fff;
    }
    .ruler {
        display: flex;
        justify-content: center;
        padding-top: 3px;
    }
    ruler-v { margin-left: 5px; }
    word-scrollbar {
        grid-column: 3;
        grid-row: 1 / 3;
    }
    .canvas {
        display: flex;
        justify-content: center;
        align-items: flex-start;
        overflow: hidden;
        margin-top: -16px;
        padding-top: 17px;
    }
    .page {
        width: 1224px;
        min-height: 1584px;
        padding: 145px 144px;
        background: #fff;
        box-shadow: 0 0 10px rgba(40, 45, 50, .7);
    }
    .caret {
        width: 2px;
        height: 26px;
        margin-bottom: 35px;
        background: #000;
    }
    </style>
    <div class="corner"><button aria-label="Left Tab"><span><word-icon name="tabstop"></word-icon></span></button></div>
    <div class="ruler"><ruler-h></ruler-h></div>
    <ruler-v></ruler-v>
    <div class="canvas">
        <article class="page">
            <div class="caret"></div>
            <slot></slot>
        </article>
    </div>
    <word-scrollbar></word-scrollbar>
`);

define('math-card', `
    <style>
    :host {
        display: grid;
        grid-template-columns: 1fr 384px;
        row-gap: 12px;
        width: 605px;
        padding: 16px 19px 19px 22px;
        margin-left: 159px;
        box-sizing: border-box;
        border: 5px solid #000;
        border-radius: 46px;
        background: #d99694;
        font: bold 36px/36px Lato, sans-serif;
        color: #000;
        white-space: nowrap;
    }
    .left {
        display: flex;
        justify-content: flex-end;
        gap: 10px;
        padding: 16px 16px 0 0;
    }
    .box {
        height: 66px;
        padding: 16px 0 0 18px;
        border: 4px solid #000;
        border-radius: 12px;
    }
    .violet div {
        height: 31px;
        overflow: hidden;
    }
    .blue { background: #daedf3; }
    .violet { background: #ccc1da; }
    .green { background: #d7e3bc; }
    .tens { color: #f00; }
    .ones { color: #31859c; }
    </style>
    <div class="left"><span>86 + 45</span><span>=</span></div>
    <div class="box blue"><div>12 <span class="tens">tens</span> + 11 <span class="ones">ones</span></div></div>
    <div class="left"><span>=</span></div>
    <div class="box violet"><div>(12+1) <span class="tens">tens</span> + 1 <span class="ones">ones</span></div></div>
    <div class="left"><span>=</span></div>
    <div class="box green"><div>13 <span class="tens">tens</span> + ? <span class="ones">ones</span></div></div>
`);

define('word-statusbar', `
    <style>
    :host {
        display: flex;
        align-items: stretch;
        height: 22px;
        border-top: 1px solid #8b9097;
        background: linear-gradient(#dfe2e6, #bec2c8);
    }
    .info {
        flex: 1;
        display: flex;
    }
    .info button {
        gap: 14px;
        padding: 0 9px;
        border-right: 1px solid #8f949b;
        box-shadow: 1px 0 #eceef1;
    }
    .views, .zoom {
        display: flex;
        align-items: center;
    }
    .views {
        padding-left: 5px;
        border-left: 1px solid #8f949b;
    }
    .views button {
        width: 18px;
        height: 19px;
        border: 1px solid transparent;
        border-radius: 2px;
    }
    .views .on {
        border-color: #c49b3c;
        background: #fbd978;
    }
    .zoom {
        padding: 0 4px 0 10px;
    }
    .zoom .percent { margin-right: 8px; }
    input {
        appearance: none;
        width: 100px;
        height: 16px;
        background: linear-gradient(#7c8189, #7c8189) center / 100% 1px no-repeat;
    }
    input::-webkit-slider-thumb {
        appearance: none;
        width: 9px;
        height: 13px;
        border: 1px solid #666;
        border-radius: 1px 1px 5px 5px;
        background: #f4f5f7;
    }
    </style>
    <div class="info">
        <button>Page: 1 of 1</button>
        <button>Words: 21</button>
        <button><word-icon name="proof"></word-icon>English (U.S.)</button>
    </div>
    <div class="views">
        <button class="on" aria-label="Print Layout"><word-icon name="print"></word-icon></button>
        <button aria-label="Full Screen Reading"><word-icon name="reading"></word-icon></button>
        <button aria-label="Web Layout"><word-icon name="web"></word-icon></button>
        <button aria-label="Outline"><word-icon name="outline"></word-icon></button>
        <button aria-label="Draft"><word-icon name="draft"></word-icon></button>
    </div>
    <div class="zoom">
        <button class="percent">150%</button>
        <button aria-label="Zoom Out"><word-icon name="minus"></word-icon></button>
        <input type="range" min="0" max="100" value="57" aria-label="Zoom">
        <button aria-label="Zoom In"><word-icon name="plus"></word-icon></button>
    </div>
`);

define('win-taskbar', `
    <style>
    :host {
        display: flex;
        height: 40px;
        background: linear-gradient(90deg, #20363c, #1e3040 60%, #192742);
        color: #fff;
    }
    .start { width: 48px; }
    .search {
        display: flex;
        align-items: center;
        width: 288px;
        padding: 0 10px 0 12px;
        background: #f2f2f2;
        color: #333;
        font-size: 14px;
    }
    .search input {
        flex: 1;
        min-width: 0;
        margin-left: 10px;
        outline: 0;
    }
    .search input::placeholder { color: #333; opacity: 1; }
    .search .pics {
        display: flex;
        align-items: center;
        gap: 2px;
    }
    .apps {
        flex: 1;
        display: flex;
        padding-left: 2px;
    }
    .apps button {
        width: 43px;
        margin: 0 3px;
        border-bottom: 2px solid transparent;
        padding-top: 2px;
    }
    .apps .running { border-color: #76b9ed; }
    .apps .active { background: #50626b; }
    .tray {
        display: flex;
        align-items: center;
        font-size: 12px;
        text-align: center;
    }
    .weather {
        gap: 8px;
        margin-right: 18px;
        font-size: 13px;
    }
    .icons {
        display: flex;
        align-items: center;
    }
    .icons button {
        width: 24px;
        height: 40px;
    }
    .lang { width: 38px; }
    .clock { width: 62px; }
    .tray .lang, .tray .clock { line-height: 18px; }
    .notify {
        width: 42px;
        height: 40px;
    }
    .peek {
        width: 5px;
        height: 40px;
        margin-left: 6px;
        border-left: 1px solid #56637a;
    }
    </style>
    <button class="start" aria-label="Start"><word-icon name="start"></word-icon></button>
    <label class="search">
        <word-icon name="search"></word-icon>
        <input type="text" placeholder="Type here to search" aria-label="Type here to search">
        <span class="pics"><word-icon name="medal"></word-icon><word-icon name="casebox"></word-icon></span>
    </label>
    <div class="apps">
        <button aria-label="Edge"><word-icon name="edge"></word-icon></button>
        <button aria-label="File Explorer"><word-icon name="explorer"></word-icon></button>
        <button aria-label="Store"><word-icon name="store"></word-icon></button>
        <button class="running" aria-label="Photos"><word-icon name="photos"></word-icon></button>
        <button class="running active" aria-label="Word"><word-icon name="wordapp"></word-icon></button>
        <button class="running" aria-label="Security"><word-icon name="shield"></word-icon></button>
        <button class="running" aria-label="Paint"><word-icon name="paint"></word-icon></button>
        <button class="running" aria-label="Firefox"><word-icon name="firefox"></word-icon></button>
    </div>
    <div class="tray">
        <button class="weather"><word-icon name="haze"></word-icon><span>30°C&nbsp;&nbsp; Haze</span></button>
        <div class="icons">
            <button aria-label="Show hidden icons"><word-icon name="chevron"></word-icon></button>
            <button aria-label="Meet Now"><word-icon name="meet"></word-icon></button>
            <button aria-label="Network"><word-icon name="globe"></word-icon></button>
            <button aria-label="Volume"><word-icon name="speaker"></word-icon></button>
        </div>
        <button class="lang">ENG<br>US</button>
        <button class="clock">1:21 PM<br>10/6/2023</button>
        <button class="notify" aria-label="Notifications"><word-icon name="notify"></word-icon></button>
        <span class="peek"></span>
    </div>
`);
</script>
</body>
</html>
